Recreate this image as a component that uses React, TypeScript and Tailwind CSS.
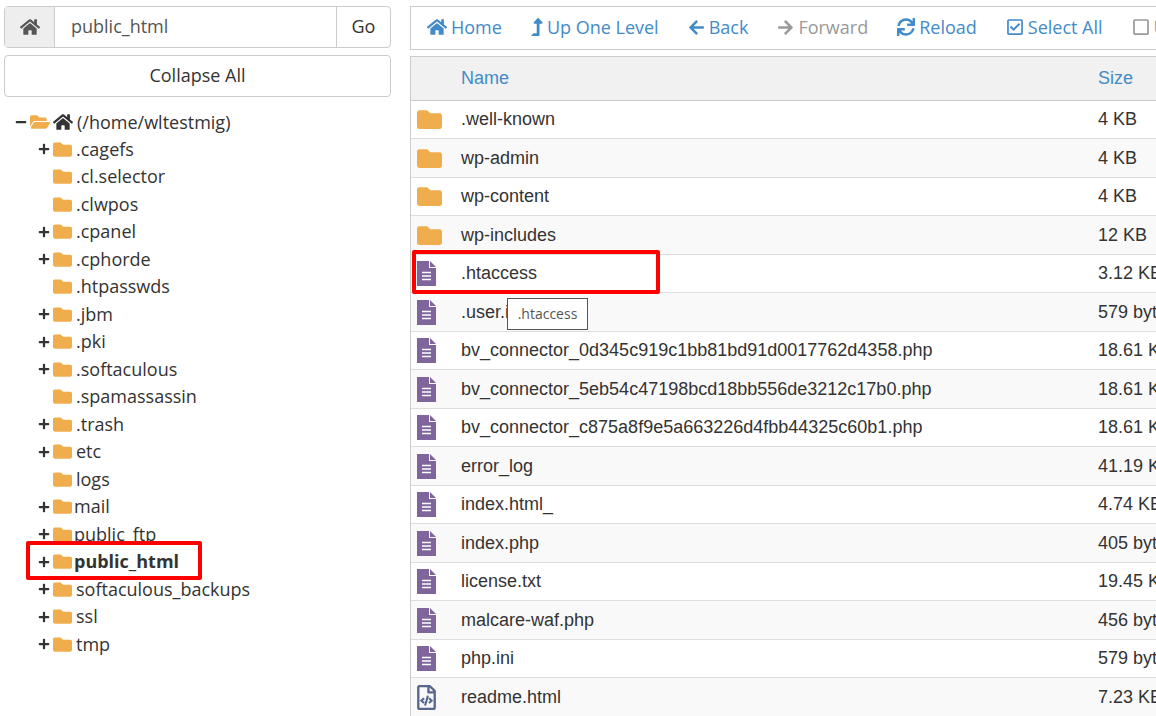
import { useState, type ReactNode } from 'react'
import clsx from 'clsx'
import {
  FaArrowLeft,
  FaArrowRight,
  FaFolder,
  FaFolderOpen,
  FaHome,
  FaLevelUpAlt,
  FaMinus,
  FaPlus,
  FaRegCheckSquare,
  FaRegFileCode,
  FaRegSquare,
  FaSync,
} from 'react-icons/fa'

type TreeNode = { name: string; leaf?: boolean; current?: boolean; tight?: boolean }
type Kind = 'folder' | 'text' | 'code'
type Entry = { name: string; size: string; kind: Kind; marked?: boolean }

const tree: TreeNode[] = [
  { name: '.cagefs' },
  { name: '.cl.selector', leaf: true },
  { name: '.clwpos', leaf: true },
  { name: '.cpanel' },
  { name: '.cphorde' },
  { name: '.htpasswds', leaf: true },
  { name: '.jbm' },
  { name: '.pki' },
  { name: '.softaculous' },
  { name: '.spamassassin', leaf: true },
  { name: '.trash' },
  { name: 'etc' },
  { name: 'logs', leaf: true },
  { name: 'mail', tight: true },
  { name: 'public_ftp', tight: true },
  { name: 'public_html', tight: true, current: true },
  { name: 'softaculous_backups' },
  { name: 'ssl' },
  { name: 'tmp' },
]

const entries: Entry[] = [
  { name: '.well-known', size: '4 KB', kind: 'folder' },
  { name: 'wp-admin', size: '4 KB', kind: 'folder' },
  { name: 'wp-content', size: '4 KB', kind: 'folder' },
  { name: 'wp-includes', size: '12 KB', kind: 'folder' },
  { name: '.htaccess', size: '3.12 KB', kind: 'text', marked: true },
  { name: '.user.ini', size: '579 bytes', kind: 'text' },
  { name: 'bv_connector_0d345c919c1bb81bd91d0017762d4358.php', size: '18.61 KB', kind: 'text' },
  { name: 'bv_connector_5eb54c47198bcd18bb556de3212c17b0.php', size: '18.61 KB', kind: 'text' },
  { name: 'bv_connector_c875a8f9e5a663226d4fbb44325c60b1.php', size: '18.61 KB', kind: 'text' },
  { name: 'error_log', size: '41.19 KB', kind: 'text' },
  { name: 'index.html_', size: '4.74 KB', kind: 'text' },
  { name: 'index.php', size: '405 bytes', kind: 'text' },
  { name: 'license.txt', size: '19.45 KB', kind: 'text' },
  { name: 'malcare-waf.php', size: '456 bytes', kind: 'text' },
  { name: 'php.ini', size: '579 bytes', kind: 'text' },
  { name: 'readme.html', size: '7.23 KB', kind: 'code' },
]

export default function App() {
  return (
    <div className="flex h-screen gap-[19px] overflow-hidden bg-white pt-[6px] pl-1 font-['Open_Sans',sans-serif] text-[18px] text-[#333]">
      <Sidebar />
      <main className="min-w-0 flex-1">
        <Toolbar />
        <FileTable />
      </main>
    </div>
  )
}

function Sidebar() {
  const [path, setPath] = useState('public_html')

  return (
    <aside className="w-[387px] shrink-0">
      <form className="flex h-[42px] rounded-sm border border-[#ccc]" onSubmit={(e) => e.preventDefault()}>
        <label htmlFor="path" className="flex w-[50px] items-center justify-center border-r border-[#ccc] bg-[#eee] text-[#555]">
          <FaHome size={20} aria-label="Home directory" />
        </label>
        <input
          id="path"
          value={path}
          onChange={(e) => setPath(e.target.value)}
          className="min-w-0 flex-1 px-4 pb-0.5 text-[#555] outline-none"
        />
        <button type="submit" className="w-[54px] border-l border-[#ccc] pb-0.5">
          Go
        </button>
      </form>
      <button className="mt-[7px] h-[42px] w-full rounded-sm border border-[#ccc] pb-0.5">Collapse All</button>

      <ul className="mt-3">
        <li className="flex h-[26px] items-center pl-[11px]">
          <FaMinus size={12} className="mr-[3px]" />
          <FaFolderOpen size={20} className="mr-[3px] text-[#f0ad4e]" />
          <FaHome size={20} className="mr-1" />
          <button>(/home/wltestmig)</button>
        </li>
        {tree.map((n) => (
          <li key={n.name} className="relative flex items-center pl-[34px] odd:h-[27px] even:h-[28px]">
            <span className="w-[15px]">{!n.leaf && <FaPlus size={12} />}</span>
            <FaFolder size={19} className="text-[#f0ad4e]" />
            <button className={clsx(n.tight ? 'ml-0.5' : 'ml-1', n.current && 'font-bold')}>{n.name}</button>
            {n.current && (
              <span className="pointer-events-none absolute -top-[7px] left-[22px] h-[39px] w-[176px] rounded-xs border-4 border-[#ff0000]" />
            )}
          </li>
        ))}
      </ul>
    </aside>
  )
}

function Toolbar() {
  return (
    <div className="flex h-[44px] items-center gap-[29px] overflow-hidden border border-r-0 border-[#ccc] pb-0.5 pl-4 text-[#428bca]">
      <Tool icon={<FaHome size={20} />} label="Home" />
      <Tool icon={<FaLevelUpAlt size={18} className="w-[12px]" />} label="Up One Level" />
      <Tool icon={<FaArrowLeft size={17} />} label="Back" />
      <Tool icon={<FaArrowRight size={17} />} label="Forward" disabled />
      <Tool icon={<FaSync size={18} />} label="Reload" />
      <Tool icon={<FaRegCheckSquare size={18} />} label="Select All" />
      <Tool icon={<FaRegSquare size={18} />} label="Unselect All" disabled />
    </div>
  )
}

function Tool({ icon, label, disabled }: { icon: ReactNode; label: string; disabled?: boolean }) {
  return (
    <button disabled={disabled} className="flex shrink-0 items-center gap-1 whitespace-nowrap disabled:text-[#999]">
      {icon}
      {label}
    </button>
  )
}

function FileTable() {
  return (
    <table className="mt-[6px] w-full table-fixed border-separate border-spacing-0 border-t border-l border-[#ccc] font-['Liberation_Sans',Arial,sans-serif]">
      <thead>
        <tr className="h-[44px] bg-[#f1f1f1] text-left text-[#428bca]">
          <th className="w-[50px] border-b border-[#ccc]" />
          <th className="border-b border-[#ccc] font-normal">Name</th>
          <th className="w-[58px] border-b border-[#ccc] font-normal">Size</th>
        </tr>
      </thead>
      <tbody>
        {entries.map((e) => (
          <tr key={e.name} className="odd:h-[38px] even:h-[39px] even:bg-[#f9f9f9]">
            <td className="relative border-b border-[#ddd] p-0 pl-[6px]">
              <EntryIcon kind={e.kind} />
              {e.marked && <Callout name={e.name} />}
            </td>
            <td className="border-b border-[#ddd] p-0 whitespace-nowrap">{e.name}</td>
            <td className="border-b border-[#ddd] p-0 whitespace-nowrap">{e.size}</td>
          </tr>
        ))}
      </tbody>
    </table>
  )
}

function EntryIcon({ kind }: { kind: Kind }) {
  if (kind === 'folder') return <FaFolder size={25} className="text-[#f0ad4e]" />
  if (kind === 'code') return <FaRegFileCode size={25} className="w-[19px] text-[#56668c]" />
  return (
    <svg viewBox="0 0 19 25" className="h-[25px] w-[19px]">
      <path d="M0 0H12V7H19V25H0Z" fill="#80659c" />
      <path d="M13 0L19 6H13Z" fill="#80659c" />
      <path d="M5 11.5H14M5 15H14M5 18.5H14" stroke="#fff" strokeWidth="1.5" />
    </svg>
  )
}

// highlight frame plus the hover title of the row
function Callout({ name }: { name: string }) {
  return (
    <>
      <span className="pointer-events-none absolute -top-[5px] left-px z-10 h-[44px] w-[248px] rounded-xs border-4 border-[#ff0000]" />
      <span
        role="tooltip"
        className="absolute top-[43px] left-[96px] z-10 flex h-[32px] w-[81px] items-center justify-center border border-[#555] bg-white pb-0.5 font-['Open_Sans',sans-serif] text-[14px] text-[#555]"
      >
        {name}
      </span>
    </>
  )
}
